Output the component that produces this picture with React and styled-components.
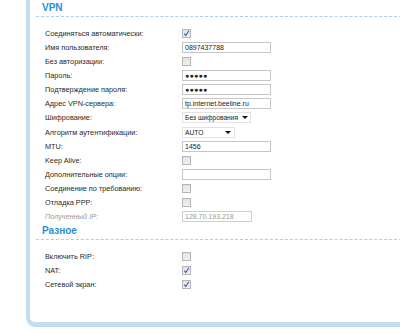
import React from 'react';
import styled, {createGlobalStyle} from 'styled-components';

const GlobalStyle = createGlobalStyle`
  html, body {
    margin: 0;
    padding: 0;
    background: #fff;
    overflow: hidden;
  }
  body {
    font-family: "Liberation Sans", Arial, sans-serif;
    color: #222;
  }
`

const Page = styled.div`
  width: 400px;
  height: 334px;
  overflow: hidden;
`

const Panel = styled.div`
  margin-left: 26px;
  width: 420px;
  border: 4px solid #c3def0;
  border-top: none;
  border-bottom-width: 5px;
  border-radius: 0 0 9px 9px;
  padding: 2px 0 31px 6px;
  box-sizing: border-box;
`

const Section = styled.div`
  margin-top: ${p => p.$top || 0}px;
`

const Header = styled.div`
  font-size: 10px;
  font-weight: bold;
  color: #2a8fd2;
  line-height: 12px;
  padding: 0 0 2px 6px;
  border-bottom: 1px dashed #a9d0ea;
`

const Rows = styled.div`
  padding: 9px 0 0 9px;
`

const Row = styled.div`
  display: grid;
  grid-template-columns: 137px 1fr;
  align-items: center;
  height: 14.15px;
`

const Label = styled.div`
  font-size: 7.3px;
  color: ${p => (p.$disabled ? '#9a9a9a' : '#2a2a2a')};
  font-style: ${p => (p.$disabled ? 'italic' : 'normal')};
  white-space: nowrap;
`

const Field = styled.div`
  width: ${p => p.$w || 89}px;
  height: 11px;
  box-sizing: border-box;
  border: 1px solid ${p => (p.$disabled ? '#cfcfcf' : '#c6c6c6')};
  background: #fff;
  font-size: 7px;
  line-height: 9px;
  padding-left: 2px;
  color: ${p => (p.$disabled ? '#999' : '#222')};
  white-space: nowrap;
  overflow: hidden;
`

const Dots = styled.span`
  font-size: 7px;
  font-weight: bold;
  letter-spacing: 0.3px;
`

const Select = styled.div`
  width: ${p => p.$w}px;
  height: 11px;
  box-sizing: border-box;
  border: 1px solid #e2e2e2;
  font-size: 6.7px;
  line-height: 9px;
  padding-left: 2px;
  display: flex;
  align-items: center;
  justify-content: space-between;
  white-space: nowrap;
`

const Arrow = styled.span`
  flex: none;
  width: 0;
  height: 0;
  margin: 0 3px 0 4px;
  border-left: 3px solid transparent;
  border-right: 3px solid transparent;
  border-top: 3px solid #111;
`

const Box = styled.span`
  display: flex;
  align-items: center;
  justify-content: center;
  width: 9px;
  height: 9px;
  box-sizing: border-box;
  border: 1px solid #b5b5b5;
  background: linear-gradient(#e3e3e3, #f2f2f2);
`

const Check = ({on}) => (
    <Box>
        {on && (
            <svg width="7" height="7" viewBox="0 0 7 7">
                <path d="M1.2 3.6 L2.8 5.6 L5.8 0.8" fill="none" stroke="#3b5bb8" strokeWidth="1.1"/>
            </svg>
        )}
    </Box>
);

export default function App() {
    return (
        <Page>
            <GlobalStyle/>
            <Panel>
                <Section>
                    <Header>VPN</Header>
                    <Rows>
                        <Row><Label>Соединяться автоматически:</Label><Check on/></Row>
                        <Row><Label>Имя пользователя:</Label><Field>0897437788</Field></Row>
                        <Row><Label>Без авторизации:</Label><Check/></Row>
                        <Row><Label>Пароль:</Label><Field><Dots>●●●●●</Dots></Field></Row>
                        <Row><Label>Подтверждение пароля:</Label><Field><Dots>●●●●●</Dots></Field></Row>
                        <Row><Label>Адрес VPN-сервера:</Label><Field>tp.internet.beeline.ru</Field></Row>
                        <Row><Label>Шифрование:</Label><Select $w={69}>Без шифрования<Arrow/></Select></Row>
                        <Row><Label>Алгоритм аутентификации:</Label><Select $w={53}>AUTO<Arrow/></Select></Row>
                        <Row><Label>MTU:</Label><Field>1456</Field></Row>
                        <Row><Label>Keep Alive:</Label><Check/></Row>
                        <Row><Label>Дополнительные опции:</Label><Field/></Row>
                        <Row><Label>Соединение по требованию:</Label><Check/></Row>
                        <Row><Label>Отладка PPP:</Label><Check/></Row>
                        <Row><Label $disabled>Полученный IP:</Label><Field $w={70} $disabled>128.70.193.218</Field></Row>
                    </Rows>
                </Section>
                <Section $top={1}>
                    <Header>Разное</Header>
                    <Rows>
                        <Row><Label>Включить RIP:</Label><Check/></Row>
                        <Row><Label>NAT:</Label><Check on/></Row>
                        <Row><Label>Сетевой экран:</Label><Check on/></Row>
                    </Rows>
                </Section>
            </Panel>
        </Page>
    );
}
